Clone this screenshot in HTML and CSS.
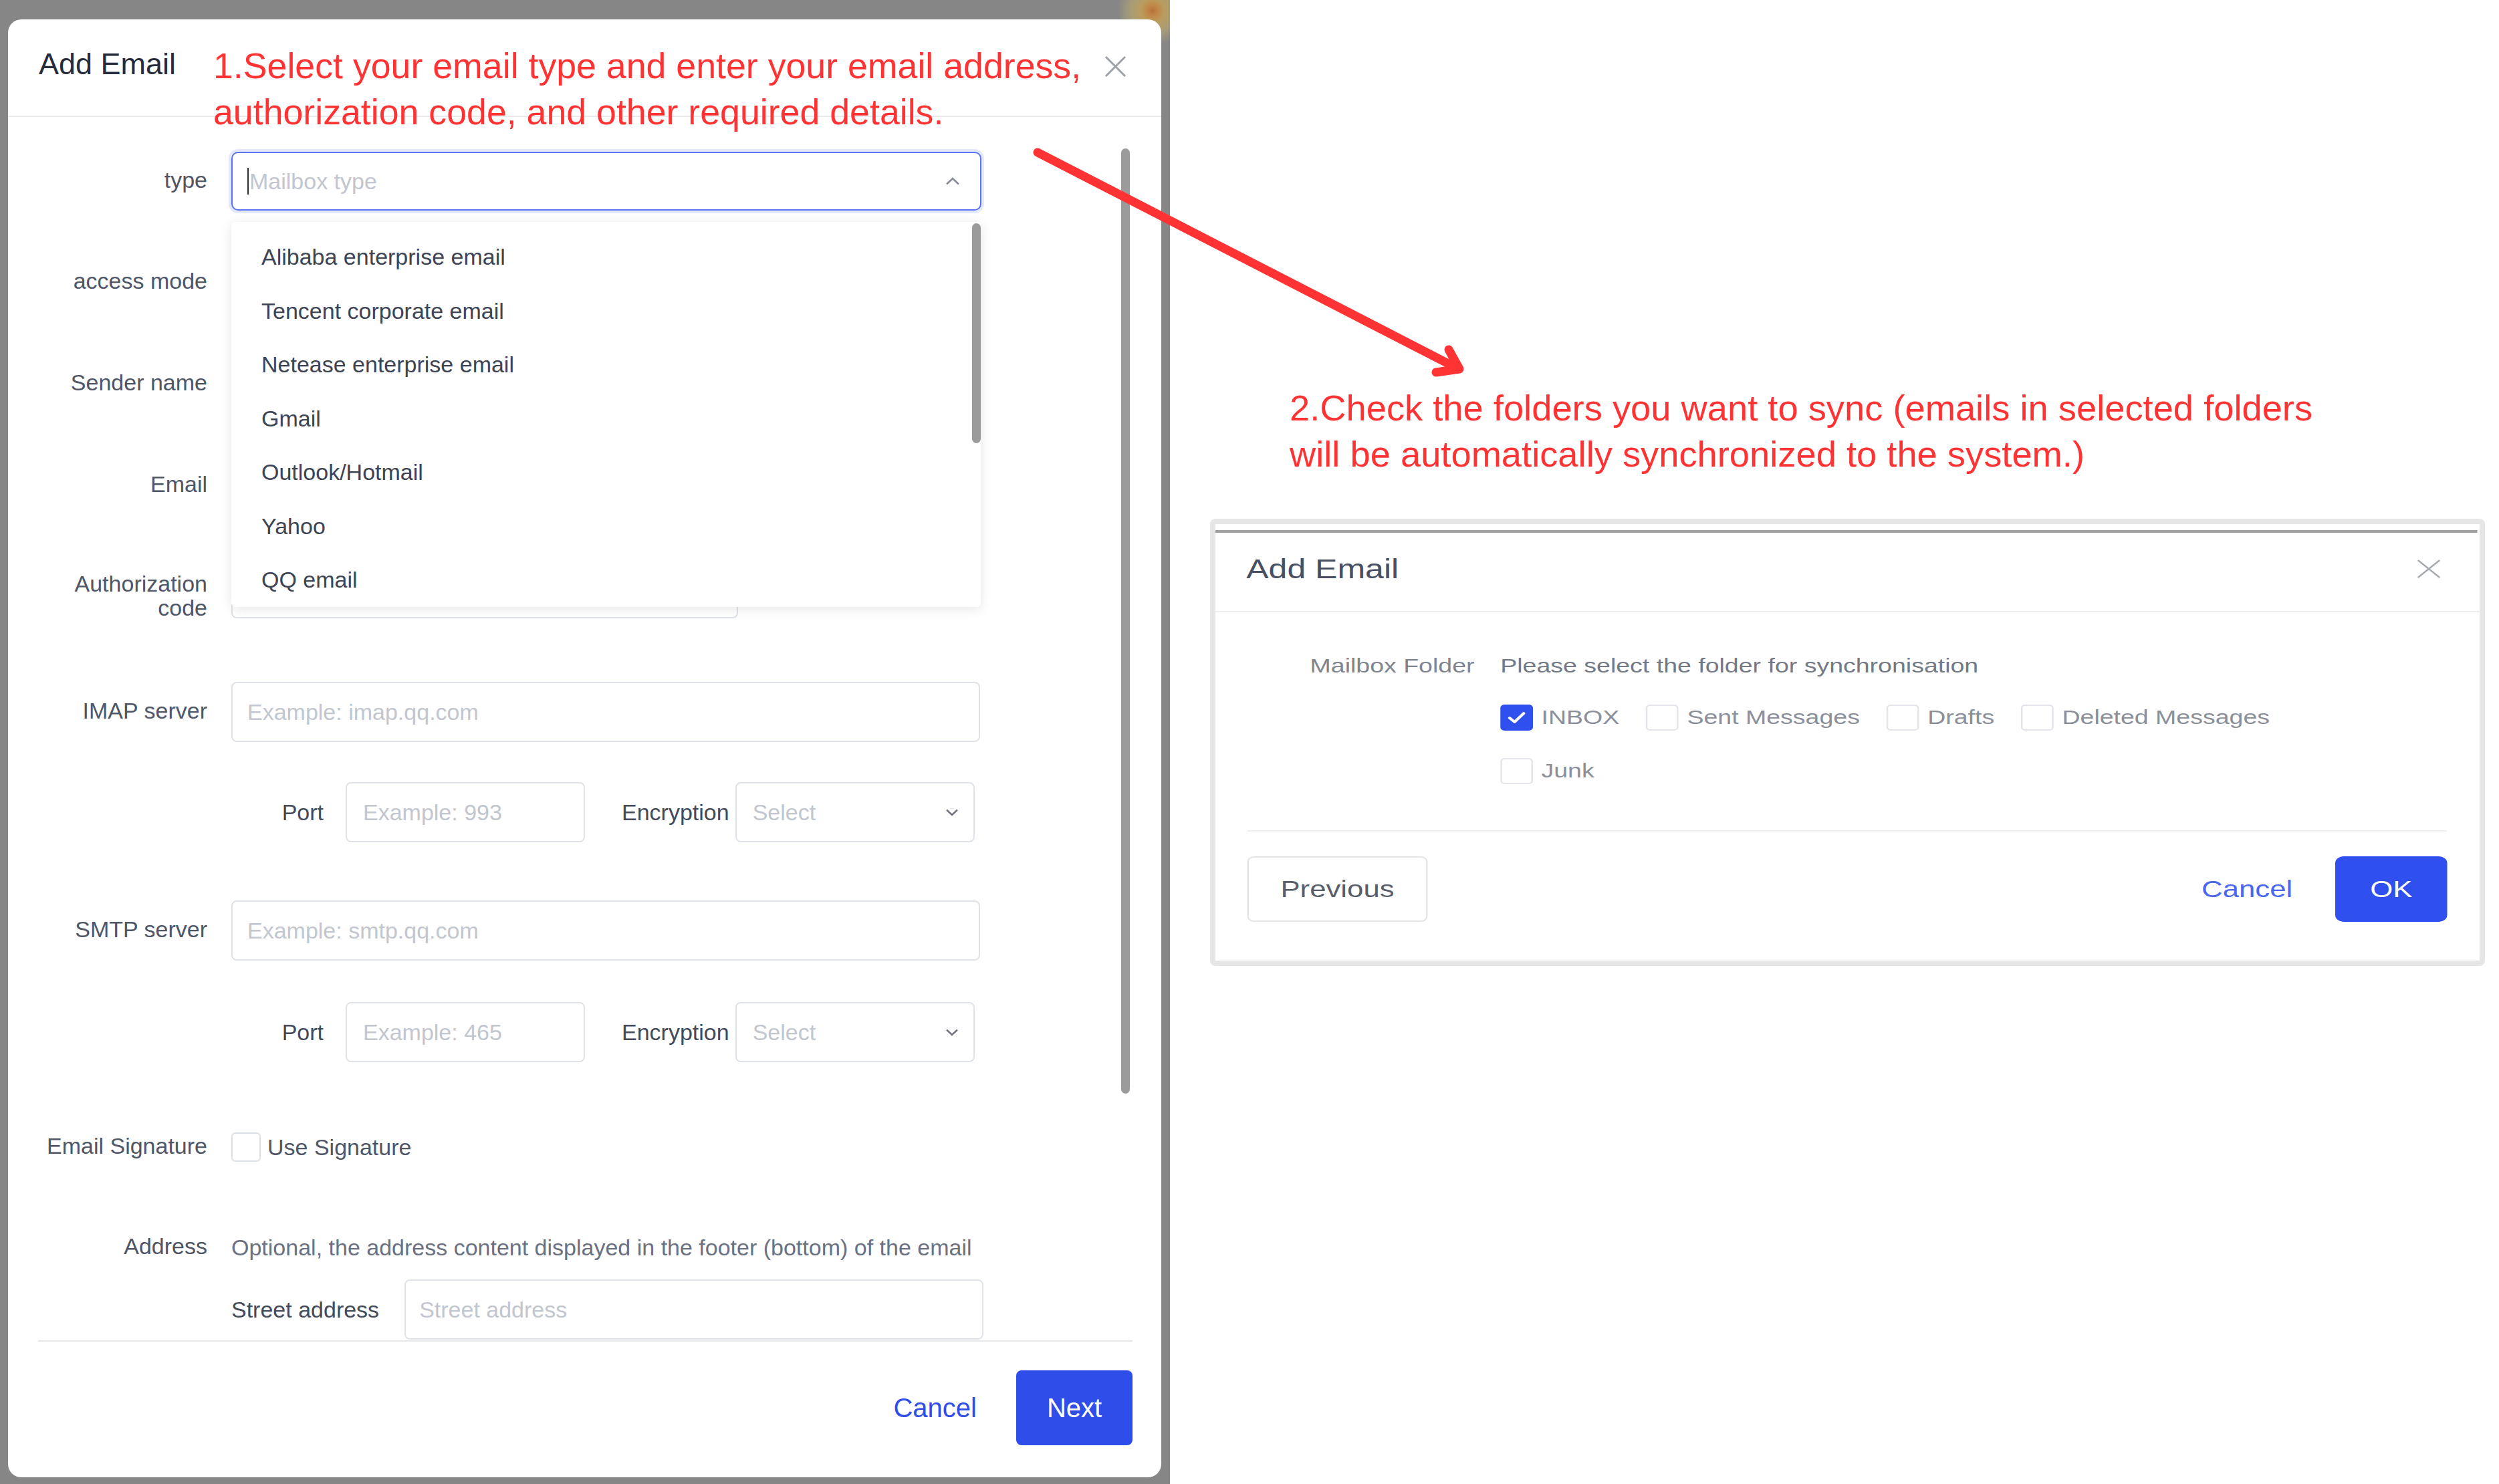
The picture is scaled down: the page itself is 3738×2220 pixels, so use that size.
FILE: index.html
```html
<!DOCTYPE html>
<html lang="en">
<head>
<meta charset="utf-8">
<title>Add Email</title>
<link rel="stylesheet" href="styles.css">
</head>
<body>
<div class="page">
  <section class="mask">
    <div class="dialog">
      <header class="dlg-head">
        <h1 class="dlg-title">Add Email</h1>
        <span class="dlg-close"><svg width="33" height="33" viewBox="0 0 33 33"><path d="M2 2L31 31M31 2L2 31" stroke="#9ca1a9" stroke-width="3" fill="none"/></svg></span>
      </header>
      <div class="dlg-body">
        <div class="form">
          <div class="row">
            <span class="lbl">type</span>
            <div class="select-wrap">
              <div class="ctl focus"><span class="caret"></span><span class="ph">Mailbox type</span>
                <svg class="chev" width="22" height="12" viewBox="0 0 22 12"><path d="M2 10.5L11 2L20 10.5" stroke="#868b95" stroke-width="2.6" fill="none"/></svg>
              </div>
              <div class="dropdown">
                <ul class="opts">
                  <li>Alibaba enterprise email</li>
                  <li>Tencent corporate email</li>
                  <li>Netease enterprise email</li>
                  <li>Gmail</li>
                  <li>Outlook/Hotmail</li>
                  <li>Yahoo</li>
                  <li>QQ email</li>
                </ul>
                <span class="dd-thumb"></span>
              </div>
            </div>
          </div>
          <div class="row">
            <span class="lbl">access mode</span>
            <div class="ctl"></div>
          </div>
          <div class="row">
            <span class="lbl">Sender name</span>
            <div class="ctl"></div>
          </div>
          <div class="row">
            <span class="lbl">Email</span>
            <div class="ctl"></div>
          </div>
          <div class="row r-auth">
            <span class="lbl two">Authorization<br>code</span>
            <div class="ctl auth"></div>
          </div>
          <div class="row r-imap">
            <span class="lbl">IMAP server</span>
            <div class="ctl"><span class="ph">Example: imap.qq.com</span></div>
          </div>
          <div class="row r-port1">
            <span class="lbl"></span>
            <div class="pair">
              <span class="sublbl port-lbl">Port</span>
              <div class="ctl short"><span class="ph">Example: 993</span></div>
              <span class="sublbl enc-lbl">Encryption</span>
              <div class="ctl short sel"><span class="ph">Select</span>
                <svg class="chev" width="20" height="12" viewBox="0 0 20 12"><path d="M2 2.5L10 10L18 2.5" stroke="#6f747e" stroke-width="2.4" fill="none"/></svg>
              </div>
            </div>
          </div>
          <div class="row">
            <span class="lbl">SMTP server</span>
            <div class="ctl"><span class="ph">Example: smtp.qq.com</span></div>
          </div>
          <div class="row r-port2">
            <span class="lbl"></span>
            <div class="pair">
              <span class="sublbl port-lbl">Port</span>
              <div class="ctl short"><span class="ph">Example: 465</span></div>
              <span class="sublbl enc-lbl">Encryption</span>
              <div class="ctl short sel"><span class="ph">Select</span>
                <svg class="chev" width="20" height="12" viewBox="0 0 20 12"><path d="M2 2.5L10 10L18 2.5" stroke="#6f747e" stroke-width="2.4" fill="none"/></svg>
              </div>
            </div>
          </div>
          <div class="row r-sig">
            <span class="lbl">Email Signature</span>
            <label class="check"><span class="box"></span><span>Use Signature</span></label>
          </div>
          <div class="row r-addr">
            <span class="lbl">Address</span>
            <span class="hint">Optional, the address content displayed in the footer (bottom) of the email</span>
          </div>
          <div class="row">
            <span class="lbl"></span>
            <div class="pair">
              <span class="sublbl street-lbl">Street address</span>
              <div class="ctl street"><span class="ph">Street address</span></div>
            </div>
          </div>
        </div>
        <span class="thumb"></span>
      </div>
      <footer class="dlg-foot">
        <span class="link-btn">Cancel</span>
        <span class="primary-btn">Next</span>
      </footer>
    </div>
  </section>

  <section class="side">
    <p class="note note2">2.Check the folders you want to sync (emails in selected folders<br>will be automatically synchronized to the system.)</p>
    <div class="shot">
      <div class="shot-in">
        <div class="shot-line"></div>
        <div class="shot-head">
          <span class="shot-title">Add Email</span>
          <svg width="30" height="28" viewBox="0 0 30 28"><path d="M2 1L28 27M28 1L2 27" stroke="#a6a9ae" stroke-width="2.4" fill="none"/></svg>
        </div>
        <div class="shot-body">
          <span class="shot-lbl">Mailbox Folder</span>
          <div class="shot-ctl">
            <p class="shot-hint">Please select the folder for synchronisation</p>
            <div class="boxes">
              <span class="cb-item"><span class="cb on"><svg width="35" height="35" viewBox="0 0 35 35"><path d="M9 18L15 24L26 11" stroke="#fff" stroke-width="3.6" fill="none" stroke-linecap="round" stroke-linejoin="round"/></svg></span>INBOX</span>
              <span class="cb-item"><span class="cb"></span>Sent Messages</span>
              <span class="cb-item"><span class="cb"></span>Drafts</span>
              <span class="cb-item"><span class="cb"></span>Deleted Messages</span>
              <span class="cb-item"><span class="cb"></span>Junk</span>
            </div>
          </div>
        </div>
        <div class="shot-foot">
          <span class="prev">Previous</span>
          <span class="shot-cancel">Cancel</span>
          <span class="ok">OK</span>
        </div>
      </div>
    </div>
  </section>

  <p class="note note1">1.Select your email type and enter your email address,<br>authorization code, and other required details.</p>

  <svg class="arrow" width="3738" height="2220" viewBox="0 0 3738 2220">
    <path d="M1552 228L2178 550" stroke="#ff3333" stroke-width="13" stroke-linecap="round" fill="none"/>
    <path d="M2167 523L2183 552L2148 557" stroke="#ff3333" stroke-width="13" stroke-linecap="round" stroke-linejoin="round" fill="none"/>
  </svg>
</div>
</body>
</html>
```

FILE: styles.css
```css
* { box-sizing: border-box; margin: 0; padding: 0; }
html, body { width: 3738px; height: 2220px; }
body {
  font-family: "Liberation Sans", Arial, sans-serif;
  background: #ffffff;
  overflow: hidden;
}
.page {
  position: relative;
  display: flex;
  width: 3738px;
  height: 2220px;
}

/* ---------- left: modal over a dimmed page ---------- */
.mask {
  width: 1750px;
  height: 2220px;
  flex-shrink: 0;
  padding: 29px 13px 10px 12px;
  background:
    radial-gradient(circle at 1724px 16px, #b8703c 0, #c08a4a 9px, #b99d5e 18px, #a79c78 34px, rgba(134,134,134,0) 52px),
    #868686;
}
.dialog {
  width: 1725px;
  height: 2181px;
  background: #ffffff;
  border-radius: 20px;
  display: flex;
  flex-direction: column;
  overflow: hidden;
}
.dlg-head {
  height: 146px;
  flex-shrink: 0;
  border-bottom: 2px solid #e8eaee;
  display: flex;
  justify-content: space-between;
  align-items: flex-start;
  padding: 41px 52px 0 46px;
}
.dlg-title {
  font-size: 45px;
  line-height: 52px;
  font-weight: normal;
  color: #262c3b;
}
.dlg-close { margin-top: 13px; display: block; height: 33px; }
.dlg-close svg { display: block; }

.dlg-body {
  height: 1830px;
  flex-shrink: 0;
  display: flex;
  overflow: hidden;
}
.form {
  flex: 1;
  padding: 52px 0 0 45px;
}
.thumb {
  width: 13px;
  height: 1414px;
  margin: 47px 47px 0 0;
  border-radius: 7px;
  background: #9b9b9b;
  flex-shrink: 0;
}

.row {
  display: flex;
  align-items: center;
  gap: 36px;
  margin-bottom: 62px;
}
.r-auth { margin-bottom: 93px; }
.r-imap { margin-bottom: 60px; }
.r-port1 { margin-bottom: 87px; }
.r-port2 { margin-bottom: 105px; }
.r-sig { margin-bottom: 108px; }
.r-addr { margin-bottom: 28px; }

.lbl {
  width: 253px;
  flex-shrink: 0;
  text-align: right;
  font-size: 34px;
  line-height: 40px;
  color: #4f5666;
  position: relative;
  top: -2px;
}
.lbl.two {
  align-self: flex-start;
  padding-top: 22px;
  line-height: 36px;
  top: 0;
}

.ctl {
  position: relative;
  width: 1120px;
  height: 90px;
  flex-shrink: 0;
  border: 2px solid #dfe2e8;
  border-radius: 8px;
  background: #ffffff;
  display: flex;
  align-items: center;
  padding: 0 30px 0 22px;
  font-size: 34px;
}
.ph { color: #c2c6ce; }
.ctl.focus {
  width: 1122px;
  height: 88px;
  border-color: #5a73f3;
  border-radius: 10px;
  box-shadow: 0 0 0 4px rgba(90, 115, 243, 0.16);
}
.caret {
  width: 2px;
  height: 40px;
  background: #2b2f38;
  margin-right: 1px;
}
.chev { margin-left: auto; display: block; }
.ctl.auth { width: 758px; }
.ctl.short { width: 358px; padding-left: 24px; }
.ctl.sel { padding-right: 22px; }
.ctl.street { width: 866px; padding-left: 20px; }

.select-wrap { position: relative; }
.dropdown {
  position: absolute;
  z-index: 5;
  top: 105px;
  left: 0;
  width: 1121px;
  background: #ffffff;
  border-radius: 6px;
  box-shadow: 0 3px 18px rgba(0, 0, 0, 0.10);
  display: flex;
  align-items: flex-start;
}
.opts {
  list-style: none;
  flex: 1;
  padding: 12px 0 0 0;
}
.opts li {
  height: 80.5px;
  line-height: 80.5px;
  padding-left: 45px;
  font-size: 34px;
  color: #3d4454;
}
.dd-thumb {
  width: 13px;
  height: 329px;
  margin-top: 2px;
  border-radius: 7px;
  background: #9b9b9b;
  flex-shrink: 0;
}

.pair {
  display: flex;
  align-items: center;
}
.sublbl {
  font-size: 34px;
  line-height: 40px;
  color: #434a5a;
  flex-shrink: 0;
}
.port-lbl { width: 138px; text-align: right; margin-right: 33px; }
.enc-lbl { margin-left: 55px; margin-right: 9px; }
.street-lbl { margin-right: 38px; }

.check {
  display: flex;
  align-items: center;
  gap: 10px;
  font-size: 34px;
  color: #4f5666;
}
.box {
  width: 44px;
  height: 44px;
  border: 2px solid #dcdfe6;
  border-radius: 6px;
  background: #ffffff;
}
.hint {
  font-size: 34px;
  line-height: 40px;
  color: #6b7181;
  white-space: nowrap;
}

.dlg-foot {
  margin: 0 43px 0 45px;
  border-top: 2px solid #e6e8ec;
  padding-top: 43px;
  display: flex;
  justify-content: flex-end;
  align-items: center;
}
.link-btn {
  font-size: 40px;
  color: #2f4de9;
  margin-right: 59px;
}
.primary-btn {
  width: 174px;
  height: 112px;
  border-radius: 8px;
  background: #2f4de9;
  color: #ffffff;
  font-size: 40px;
  display: flex;
  align-items: center;
  justify-content: center;
}

/* ---------- annotations ---------- */
.note {
  font-size: 53.7px;
  line-height: 69px;
  color: #ff3333;
  white-space: nowrap;
}
.note1 {
  position: absolute;
  left: 319px;
  top: 64px;
}
.note2 { font-size: 54.3px; }
.arrow {
  position: absolute;
  left: 0;
  top: 0;
  pointer-events: none;
}

/* ---------- right: second step screenshot ---------- */
.side {
  flex: 1;
  padding: 576px 0 0 60px;
}
.note2 { margin-left: 119px; }
.shot {
  margin-top: 62px;
  width: 1907px;
  height: 669px;
  border: 8px solid #e6e6e6;
  border-radius: 8px;
  background: #ffffff;
  overflow: hidden;
}
.shot-in {
  width: 1513px;
  height: 653px;
  transform: scaleX(1.25);
  transform-origin: 0 0;
  display: flex;
  flex-direction: column;
}
.shot-line {
  height: 4px;
  margin: 9px 3px 0 0;
  background: #a0a0a0;
  flex-shrink: 0;
}
.shot-head {
  height: 119px;
  flex-shrink: 0;
  border-bottom: 2px solid #eeeff1;
  display: flex;
  align-items: center;
  justify-content: space-between;
  padding: 0 46px 9px 37px;
}
.shot-head svg { display: block; }
.shot-title {
  font-size: 40px;
  color: #484f63;
}
.shot-body {
  height: 326px;
  flex-shrink: 0;
  display: flex;
  gap: 31px;
  padding-top: 60px;
}
.shot-lbl {
  width: 310px;
  flex-shrink: 0;
  text-align: right;
  font-size: 30px;
  line-height: 40px;
  color: #7f858f;
}
.shot-hint {
  font-size: 30px;
  line-height: 40px;
  color: #737985;
}
.boxes {
  width: 940px;
  margin-top: 37px;
  display: flex;
  flex-wrap: wrap;
  column-gap: 32px;
  row-gap: 40px;
}
.cb-item {
  height: 40px;
  display: flex;
  align-items: center;
  gap: 10px;
  font-size: 30px;
  color: #8a8f99;
}
.cb {
  width: 39px;
  height: 39px;
  border: 2px solid #e3e5ea;
  border-radius: 5px;
  background: #ffffff;
  display: flex;
  align-items: center;
  justify-content: center;
}
.cb.on {
  background: #2f50ee;
  border-color: #2f50ee;
}
.cb svg { display: block; }
.shot-foot {
  margin: 0 39px 0 38px;
  border-top: 2px solid #eeeff1;
  padding-top: 37px;
  display: flex;
  align-items: center;
}
.prev {
  width: 216px;
  height: 98px;
  border: 2px solid #e4e5e8;
  border-radius: 8px;
  font-size: 35px;
  color: #595f6a;
  display: flex;
  align-items: center;
  justify-content: center;
  margin-right: auto;
}
.shot-cancel {
  font-size: 35px;
  color: #4a68ef;
  margin-right: 51px;
}
.ok {
  width: 134px;
  height: 98px;
  border-radius: 10px;
  background: #2f50ee;
  color: #ffffff;
  font-size: 35px;
  display: flex;
  align-items: center;
  justify-content: center;
}
```
